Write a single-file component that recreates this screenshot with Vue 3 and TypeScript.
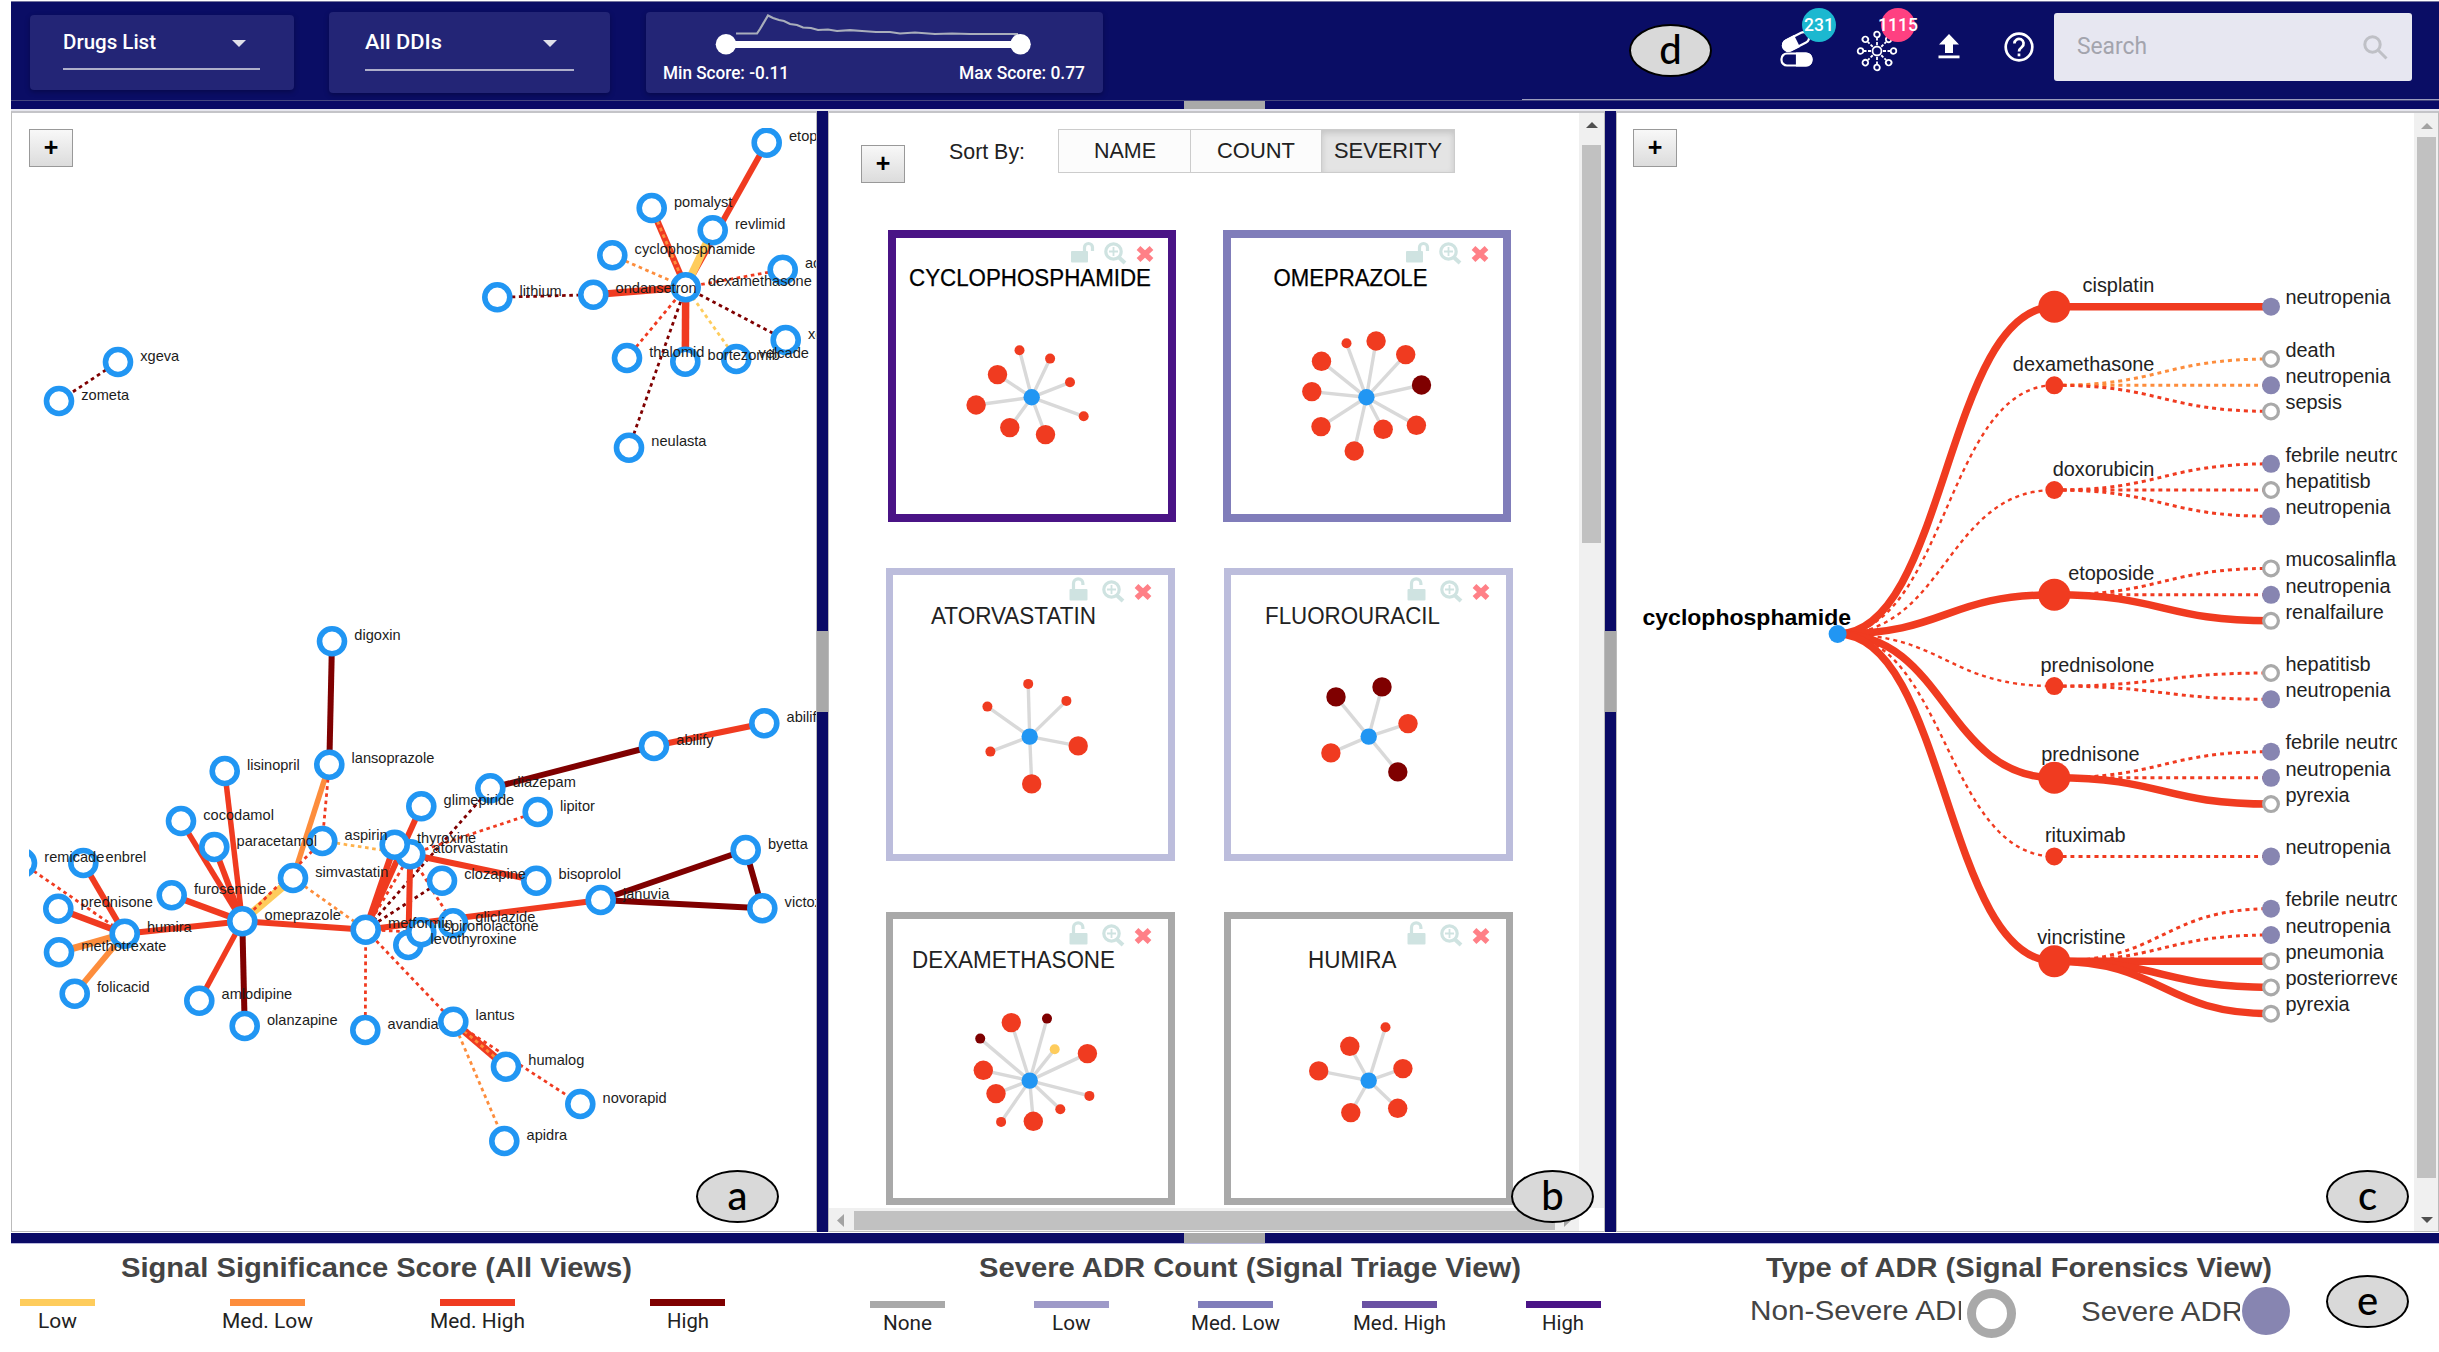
<script setup lang="ts">
import { h } from 'vue'

const RED = '#f03b20'
const DARK = '#7f0000'
const ORANGE = '#fd8d3c'
const YELLOW = '#fecc5c'
const ARIAL = '"Liberation Sans", Arial, sans-serif'
const ROBOTO = 'Roboto, sans-serif'

interface FitProps { w: number; size: number; text: string; fill?: string; weight?: number; font?: string }
// A single line of text set to an exact width.
const FitText = (p: FitProps) =>
  h('svg', { width: p.w, height: p.size, style: 'display:block;overflow:visible;flex:none' }, [
    h('text', {
      x: 0, y: p.size * 0.8, textLength: p.w, lengthAdjust: 'spacingAndGlyphs',
      'font-size': p.size, 'font-weight': p.weight ?? 400, 'font-family': p.font ?? ARIAL, fill: p.fill ?? '#222',
    }, p.text),
  ])

type Drug = [id: string, x: number, y: number, label?: string]
const drugs: Drug[] = [
  ['xgeva', 118, 362], ['zometa', 59, 401],
  ['etoposide', 766.7, 142.7], ['pomalyst', 651.7, 208], ['revlimid', 712.7, 230.3],
  ['cyclophosphamide', 612.3, 255.3], ['ondansetron', 593.3, 294.7], ['lithium', 497.3, 297.3],
  ['actemra', 782.7, 269.7], ['xeloda', 785.7, 340], ['velcade', 736.3, 359],
  ['bortezomib', 685.3, 361.7], ['thalomid', 627, 358], ['neulasta', 629, 447.7], ['dexamethasone', 685.7, 287.3],
  ['digoxin', 332, 641.3], ['lansoprazole', 329.3, 764.7], ['lisinopril', 224.7, 771],
  ['cocodamol', 181, 821], ['paracetamol', 214.3, 847], ['aspirin', 322.3, 841],
  ['remicade', 22, 863], ['enbrel', 83.3, 863], ['furosemide', 171.7, 895.3],
  ['simvastatin', 293, 878], ['omeprazole', 242.3, 921.3], ['metformin', 365.7, 929.7],
  ['humira', 124.7, 933.7], ['prednisone', 58.3, 908.7], ['methotrexate', 59, 952.3],
  ['folicacid', 74.7, 993.7], ['amlodipine', 199.3, 1000.7], ['olanzapine', 244.7, 1026],
  ['avandia', 365.3, 1030], ['atorvastatin', 410.3, 854.3], ['thyroxine', 394.7, 844.7],
  ['glimepiride', 421.3, 806.3], ['diazepam', 490.3, 788.3], ['lipitor', 537.7, 812],
  ['clozapine', 442, 880.7], ['bisoprolol', 536.3, 880.7], ['abilify', 654, 746],
  ['abilify2', 764.3, 723.3, 'abilify'], ['byetta', 745.7, 850], ['victoza', 762.3, 908.3],
  ['januvia', 600.7, 900], ['gliclazide', 453, 923.3], ['levothyroxine', 408.3, 945],
  ['spironolactone', 421.3, 932.3], ['lantus', 453.3, 1021.7], ['humalog', 506, 1066.7],
  ['novorapid', 580.3, 1104], ['apidra', 504.3, 1141],
]
const at = new Map(drugs.map((d) => [d[0], d]))

// width 0 marks a dashed (weak) interaction
type Link = [from: string, to: string, color: string, width: number]
const links: Link[] = [
  ['xgeva', 'zometa', DARK, 0],
  ['etoposide', 'dexamethasone', RED, 6], ['revlimid', 'dexamethasone', YELLOW, 8],
  ['pomalyst', 'dexamethasone', RED, 6.5], ['pomalyst', 'dexamethasone', ORANGE, 0],
  ['cyclophosphamide', 'dexamethasone', ORANGE, 0], ['ondansetron', 'dexamethasone', RED, 7],
  ['lithium', 'ondansetron', DARK, 0], ['actemra', 'dexamethasone', RED, 0],
  ['xeloda', 'dexamethasone', DARK, 0], ['velcade', 'dexamethasone', YELLOW, 0],
  ['bortezomib', 'dexamethasone', RED, 7.5], ['thalomid', 'dexamethasone', RED, 0],
  ['neulasta', 'dexamethasone', DARK, 0],
  ['digoxin', 'lansoprazole', DARK, 6], ['lansoprazole', 'simvastatin', ORANGE, 5.5],
  ['lansoprazole', 'aspirin', RED, 0],
  ['simvastatin', 'omeprazole', YELLOW, 8], ['aspirin', 'omeprazole', RED, 0],
  ['lisinopril', 'omeprazole', RED, 5.5], ['cocodamol', 'omeprazole', RED, 5.5],
  ['paracetamol', 'omeprazole', RED, 6], ['furosemide', 'omeprazole', RED, 6.5],
  ['humira', 'omeprazole', RED, 6], ['amlodipine', 'omeprazole', RED, 5.5],
  ['olanzapine', 'omeprazole', DARK, 6], ['metformin', 'omeprazole', RED, 6],
  ['simvastatin', 'metformin', ORANGE, 0], ['aspirin', 'atorvastatin', '#feb24c', 0],
  ['remicade', 'humira', RED, 0], ['enbrel', 'humira', RED, 6], ['prednisone', 'humira', RED, 6.5],
  ['methotrexate', 'humira', ORANGE, 7], ['folicacid', 'humira', ORANGE, 6],
  ['glimepiride', 'metformin', RED, 6], ['thyroxine', 'metformin', RED, 6.5],
  ['atorvastatin', 'metformin', RED, 0], ['diazepam', 'metformin', DARK, 0],
  ['clozapine', 'metformin', DARK, 0], ['lantus', 'metformin', RED, 0], ['avandia', 'metformin', RED, 0],
  ['januvia', 'metformin', RED, 6], ['spironolactone', 'metformin', RED, 0],
  ['atorvastatin', 'bisoprolol', RED, 6], ['atorvastatin', 'levothyroxine', RED, 6],
  ['lipitor', 'atorvastatin', RED, 0], ['atorvastatin', 'gliclazide', RED, 0],
  ['januvia', 'byetta', DARK, 6], ['januvia', 'victoza', DARK, 6], ['byetta', 'victoza', DARK, 6],
  ['diazepam', 'abilify', DARK, 6], ['abilify', 'abilify2', RED, 6],
  ['lantus', 'humalog', RED, 7.5], ['lantus', 'humalog', ORANGE, 0],
  ['lantus', 'novorapid', RED, 0], ['lantus', 'apidra', ORANGE, 0],
]
const edges = links.map(([a, b, color, width]) => {
  const p = at.get(a)!
  const q = at.get(b)!
  return { x1: p[1], y1: p[2], x2: q[1], y2: q[2], color, width: width || 2.8, dash: width ? undefined : '3.6 3.6' }
})

type Dot = [x: number, y: number, big: number, color?: string]
interface Card { name: string; tx: number; tw: number; cx: number; cy: number; border: string; strong: boolean; dots: Dot[] }
const rows: Card[][] = [
  [
    { name: 'CYCLOPHOSPHAMIDE', tx: 21, tw: 242, cx: 143.7, cy: 167.3, border: '#4a1486', strong: true,
      dots: [[-12.2, -47, 0], [18.4, -38.7, 0], [38.3, -15, 0], [52, 19, 0], [13.8, 37.3, 1], [-21.9, 30.3, 1], [-55.6, 7.7, 1], [-34.2, -22.7, 1]] },
    { name: 'OMEPRAZOLE', tx: 50.5, tw: 154, cx: 143.4, cy: 167.3, border: '#807dba', strong: true,
      dots: [[-19.9, -54, 0], [9.7, -56.3, 1], [39.3, -42.7, 1], [55.1, -12.3, 1, DARK], [50, 28, 1], [16.8, 32, 1], [-12.2, 53.7, 1], [-45.4, 29.3, 1], [-54.6, -5.7, 1], [-44.9, -36, 1]] },
  ],
  [
    { name: 'ATORVASTATIN', tx: 45, tw: 165, cx: 143.7, cy: 168.6, border: '#bcbddc', strong: false,
      dots: [[-1.5, -52.7, 0], [36.7, -35.7, 0], [48.5, 9.3, 1], [2, 47.3, 1], [-39.3, 15, 0], [-42.3, -30, 0]] },
    { name: 'FLUOROURACIL', tx: 41, tw: 175, cx: 144.7, cy: 168.6, border: '#bcbddc', strong: false,
      dots: [[13.3, -49.7, 1, DARK], [39.3, -13, 1], [29.1, 35.3, 1, DARK], [-37.8, 16.3, 1], [-32.7, -39.7, 1, DARK]] },
  ],
  [
    { name: 'DEXAMETHASONE', tx: 26, tw: 203, cx: 143.7, cy: 168.6, border: '#a9a9a9', strong: false,
      dots: [[-18.4, -58, 1], [17.3, -62, 0, DARK], [25, -31.3, 0, YELLOW], [57.7, -27, 1], [59.7, 15.3, 0], [30.6, 28.7, 0], [3.6, 40.7, 1], [-28.6, 41.3, 0], [-33.7, 13, 1], [-46.4, -10.3, 1], [-49.5, -42, 0, DARK]] },
    { name: 'HUMIRA', tx: 84, tw: 88.5, cx: 144.7, cy: 168.6, border: '#a9a9a9', strong: false,
      dots: [[16.8, -53.3, 0], [34.2, -12, 1], [29, 27.7, 1], [-17.9, 32, 1], [-50, -9.7, 1], [-18.9, -34.3, 1]] },
  ],
]

const SEVERE = '#8785b1'
// leaf: label, y, severe, strong, color
type Leaf = [string, number, boolean, boolean, string?]
interface Branch { name: string; y: number; strong: boolean; tx: number; ty: number; leaves: Leaf[] }
const branches: Branch[] = [
  { name: 'cisplatin', y: 306.7, strong: true, tx: 2154.4, ty: 291, leaves: [['neutropenia', 306.7, true, true]] },
  { name: 'dexamethasone', y: 385.3, strong: false, tx: 2154.4, ty: 370.5,
    leaves: [['death', 359, false, false, ORANGE], ['neutropenia', 385.3, true, false, ORANGE], ['sepsis', 411.4, false, false]] },
  { name: 'doxorubicin', y: 490, strong: false, tx: 2154.4, ty: 475,
    leaves: [['febrile neutropenia', 463.8, true, false], ['hepatitisb', 490, false, false], ['neutropenia', 516.3, true, false]] },
  { name: 'etoposide', y: 594.8, strong: true, tx: 2154.4, ty: 579.3,
    leaves: [['mucosalinflammation', 568.4, false, false], ['neutropenia', 594.8, true, false], ['renalfailure', 620.8, false, true]] },
  { name: 'prednisolone', y: 686.1, strong: false, tx: 2154.4, ty: 671.5,
    leaves: [['hepatitisb', 673, false, false], ['neutropenia', 699.3, true, false]] },
  { name: 'prednisone', y: 777.8, strong: true, tx: 2139.6, ty: 760,
    leaves: [['febrile neutropenia', 751.7, true, false], ['neutropenia', 777.8, true, false], ['pyrexia', 804.1, false, true]] },
  { name: 'rituximab', y: 856.4, strong: false, tx: 2125.6, ty: 841, leaves: [['neutropenia', 856.4, true, false]] },
  { name: 'vincristine', y: 961.2, strong: true, tx: 2125.6, ty: 943,
    leaves: [['febrile neutropenia', 908.7, true, false], ['neutropenia', 935, true, false], ['pneumonia', 961.2, false, true],
      ['posteriorreversible', 987.4, false, true], ['pyrexia', 1013.7, false, true]] },
]
const ROOT = { x: 1837.6, y: 634 }
const MID = 2054.3
const END = 2271
const curve = (x1: number, y1: number, x2: number, y2: number) => {
  const m = (x1 + x2) / 2
  return `M${x1},${y1}C${m},${y1} ${m},${y2} ${x2},${y2}`
}

interface Key { text: string; w: number; color: string }
const scoreKeys: Key[] = [
  { text: 'Low', w: 39, color: YELLOW }, { text: 'Med. Low', w: 91, color: ORANGE },
  { text: 'Med. High', w: 95, color: RED }, { text: 'High', w: 42, color: DARK },
]
const countKeys: Key[] = [
  { text: 'None', w: 49, color: '#a9a9a9' }, { text: 'Low', w: 38.5, color: '#9e9ac8' },
  { text: 'Med. Low', w: 89, color: '#807dba' }, { text: 'Med. High', w: 93, color: '#6a51a3' },
  { text: 'High', w: 42, color: '#4a1486' },
]
const spokes = [0, 45, 90, 135, 180, 225, 270, 315]
</script>

<template>
  <div class="app">
    <header class="top">
      <div class="box drugs">
        <div class="pick">
          <FitText :w="93" :size="21" text="Drugs List" fill="#fff" :weight="500" :font="ROBOTO" />
          <i class="caret"></i>
        </div>
      </div>
      <div class="box ddis">
        <div class="pick">
          <FitText :w="77" :size="21" text="All DDIs" fill="#fff" :weight="500" :font="ROBOTO" />
          <i class="caret"></i>
        </div>
      </div>
      <div class="box score">
        <svg width="457" height="52" viewBox="646 12 457 52">
          <path d="M736 33.5H757L760 29L768 15.5L773 18L779 20L784 21L790 24L797 25L803 27.5L811 28L818 30L828 29.5L837 31L850 30.2L862 31L876 32L890 32L900 33.5L915 32.5L935 34L952 33.5L970 34L985 34L1018 34" fill="none" stroke="#a9aebb" stroke-width="2.2" />
          <rect x="730" y="41" width="288" height="7" fill="#fff" />
          <circle cx="726" cy="44.3" r="10.3" fill="#fff" />
          <circle cx="1020.5" cy="44.3" r="10.3" fill="#fff" />
        </svg>
        <div class="range">
          <FitText :w="126" :size="17.5" text="Min Score: -0.11" fill="#fff" :weight="500" :font="ROBOTO" />
          <FitText :w="126" :size="17.5" text="Max Score: 0.77" fill="#fff" :weight="500" :font="ROBOTO" />
        </div>
      </div>
      <div class="tag tag-d">d</div>
      <div class="ico pills">
        <svg width="40" height="40" viewBox="1776 30 40 40" fill="none" stroke="#fff" stroke-width="2.2">
          <g transform="rotate(-27 1796 41.5)">
            <rect x="1782" y="36" width="28" height="11" rx="5.5" />
            <path d="M1782 41.5A5.500 5.500 0 0 1 1787.500 36H1796V47H1787.500A5.500 5.500 0 0 1 1782 41.500Z" fill="#fff" />
          </g>
          <rect x="1781.5" y="53.5" width="30" height="12" rx="5.500" />
          <path d="M1797 53.500H1806A5.500 6 0 0 1 1806 65.500H1797Z" fill="#fff" />
        </svg>
        <b class="count teal">231</b>
      </div>
      <div class="ico net">
        <svg width="44" height="44" viewBox="-22 -22 44 44" fill="none" stroke="#fff" stroke-width="1.8">
          <circle r="4.5" />
          <g v-for="s in spokes" :key="s" :transform="`rotate(${s})`">
            <path d="M0 -6V-13" stroke-dasharray="3 1.500" />
            <circle cy="-16.5" r="2.8" />
          </g>
        </svg>
        <b class="count pink">1115</b>
      </div>
      <svg class="ico up" width="22" height="26" viewBox="0 0 22 26" fill="#fff">
        <path d="M11 0L21 10.500H15V19H7V10.500H1Z" /><rect x="0.5" y="21.5" width="21" height="2.8" />
      </svg>
      <svg class="ico help" width="32" height="32" viewBox="-16 -16 32 32" fill="none" stroke="#fff" stroke-width="2.7">
        <circle r="13.3" />
        <path d="M-4.600 -3.600A4.600 4.600 0 1 1 2.900 0C1 1.500 0 2.300 0 4.500" /><path d="M0 6.500V9.300" />
      </svg>
      <div class="search">
        <FitText :w="70" :size="23" text="Search" fill="#a3a4ad" :font="ROBOTO" />
        <svg width="25" height="25" viewBox="0 0 25 25" fill="none" stroke="#bfc0c6" stroke-width="3">
          <circle cx="9.500" cy="9.500" r="7.700" /><path d="M15 15L23.500 23.500" />
        </svg>
      </div>
    </header>
    <div class="bar bar-top"><i></i></div>

    <main class="panels">
      <section class="panel graph">
        <button class="plus over">+</button>
        <svg width="787" height="1090" viewBox="29 128 787 1090">
          <line v-for="(e, i) in edges" :key="i" :x1="e.x1" :y1="e.y1" :x2="e.x2" :y2="e.y2" :stroke="e.color" :stroke-width="e.width" :stroke-dasharray="e.dash" />
          <circle v-for="d in drugs" :key="d[0]" :cx="d[1]" :cy="d[2]" r="12.5" fill="#fff" stroke="#2196f3" stroke-width="5.6" />
          <text v-for="d in drugs" :key="'t' + d[0]" :x="d[1] + 22.3" :y="d[2] - 1.3">{{ d[3] ?? d[0] }}</text>
        </svg>
        <div class="tag tag-a">a</div>
      </section>
      <div class="split"><i></i></div>

      <section class="panel triage">
        <div class="triage-view">
          <div class="content">
            <div class="tools">
              <button class="plus">+</button>
              <div class="sort-label"><FitText :w="76" :size="22" text="Sort By:" /></div>
              <div class="sort">
                <span class="s1"><FitText :w="62" :size="22.5" text="NAME" /></span>
                <span class="s2"><FitText :w="78" :size="22.5" text="COUNT" /></span>
                <span class="s3 on"><FitText :w="108" :size="22.5" text="SEVERITY" /></span>
              </div>
            </div>
            <div v-for="(row, r) in rows" :key="r" class="row" :class="'row' + r">
              <div v-for="c in row" :key="c.name" class="card" :style="{ borderColor: c.border }">
                <svg viewBox="7 7 274 278" width="274" height="278">
                  <g class="tool">
                    <path v-if="c.strong" d="M196.500 22V17.500A4 4 0 0 1 204.500 17.500V21" />
                    <path v-else d="M187.500 22V15.500A4.700 4.700 0 0 1 196.900 15.500V17" />
                    <rect :x="c.strong ? 183 : 183.5" y="21" :width="c.strong ? 17 : 18" height="11.5" rx="1" />
                    <circle cx="225.5" cy="21.5" r="7.7" /><path d="M231 27.500L237 33" stroke-width="4" />
                    <path d="M225.500 17V26M221 21.500H230" stroke-width="1.8" />
                  </g>
                  <path d="M250.500 18L263.500 30M263.500 18L250.500 30" stroke="#ff8087" stroke-width="5.5" />
                  <text :x="c.tx" y="55.5" :textLength="c.tw" lengthAdjust="spacingAndGlyphs" :class="{ strong: c.strong }">{{ c.name }}</text>
                  <g :transform="`translate(${c.cx} ${c.cy})`">
                    <line v-for="(d, i) in c.dots" :key="i" x1="0" y1="0" :x2="d[0]" :y2="d[1]" stroke="#d9d9d9" stroke-width="3.4" />
                    <circle v-for="(d, i) in c.dots" :key="'c' + i" :cx="d[0]" :cy="d[1]" :r="d[2] ? 9.7 : 5" :fill="d[3] ?? RED" />
                    <circle r="8.2" fill="#2196f3" />
                  </g>
                </svg>
              </div>
            </div>
          </div>
          <div class="vscroll">
            <svg width="12" height="6"><path d="M0 6L6 0L12 6Z" fill="#505050" /></svg>
            <i></i>
          </div>
        </div>
        <div class="hscroll">
          <svg width="7" height="13"><path d="M7 0L0 6.500L7 13Z" fill="#a3a3a3" /></svg>
          <i></i>
          <svg width="7" height="13"><path d="M0 0L7 6.500L0 13Z" fill="#a3a3a3" /></svg>
        </div>
        <div class="tag tag-b">b</div>
      </section>
      <div class="split"><i></i></div>

      <section class="panel forensics">
        <button class="plus over">+</button>
        <svg class="tree" width="764" height="1090" viewBox="1633 128 764 1090">
          <template v-for="b in branches" :key="b.name">
            <path :d="curve(ROOT.x, ROOT.y, MID, b.y)" :class="b.strong ? 'thick' : 'dots thin'" :stroke="RED" />
            <path v-for="l in b.leaves.filter((v) => v[3])" :key="l[1]" :d="curve(MID, b.y, END, l[1])" class="thick" :stroke="RED" />
            <path v-for="l in b.leaves.filter((v) => !v[3])" :key="l[1]" :d="curve(MID, b.y, END, l[1])" class="dots" :stroke="l[4] ?? RED" />
          </template>
          <template v-for="b in branches" :key="'n' + b.name">
            <circle :cx="MID" :cy="b.y" :r="b.strong ? 16 : 9" :fill="RED" />
            <text :x="b.tx" :y="b.ty + 0.7" text-anchor="end">{{ b.name }}</text>
            <template v-for="l in b.leaves" :key="l[1]">
              <circle v-if="l[2]" :cx="END" :cy="l[1]" r="9" :fill="SEVERE" />
              <circle v-else :cx="END" :cy="l[1]" r="7.4" fill="#fff" stroke="#a9a9a9" stroke-width="3.2" />
              <text x="2285.5" :y="l[1] - 2.3">{{ l[0] }}</text>
            </template>
          </template>
          <circle :cx="ROOT.x" :cy="ROOT.y" r="9" fill="#2196f3" />
          <text x="1642.5" y="625.4" textLength="208.5" lengthAdjust="spacingAndGlyphs" class="root">cyclophosphamide</text>
        </svg>
        <div class="vscroll far">
          <svg width="12" height="6"><path d="M0 6L6 0L12 6Z" fill="#a3a3a3" /></svg>
          <i></i>
          <svg width="12" height="6"><path d="M0 0H12L6 6Z" fill="#505050" /></svg>
        </div>
        <div class="tag tag-c">c</div>
      </section>
    </main>
    <div class="bar bar-bottom"><i></i></div>

    <footer class="legend">
      <div class="group g1">
        <FitText :w="511" :size="28.5" text="Signal Significance Score (All Views)" fill="#444" :weight="700" />
        <div class="keys">
          <div v-for="k in scoreKeys" :key="k.text" class="key">
            <i :style="{ background: k.color }"></i>
            <FitText :w="k.w" :size="21" :text="k.text" :font="ROBOTO" />
          </div>
        </div>
      </div>
      <div class="group g2">
        <FitText :w="542" :size="28.5" text="Severe ADR Count (Signal Triage View)" fill="#444" :weight="700" />
        <div class="keys">
          <div v-for="k in countKeys" :key="k.text" class="key">
            <i :style="{ background: k.color }"></i>
            <FitText :w="k.w" :size="21" :text="k.text" :font="ROBOTO" />
          </div>
        </div>
      </div>
      <div class="group g3">
        <FitText :w="506" :size="28.5" text="Type of ADR (Signal Forensics View)" fill="#444" :weight="700" />
        <div class="types">
          <div class="clip c1"><FitText :w="228" :size="28.5" text="Non-Severe ADR" fill="#444" /></div>
          <i class="ring"></i>
          <div class="clip c2"><FitText :w="162" :size="28.5" text="Severe ADR" fill="#444" /></div>
          <i class="disc"></i>
        </div>
      </div>
      <div class="tag tag-e">e</div>
    </footer>
  </div>
</template>

<style>
body { background: #fff; }
</style>

<style scoped>
.app { width: 2439px; height: 1352px; box-sizing: border-box; padding: 1px 0 0 11px; overflow: hidden; position: relative; background: #fff; font-family: "Liberation Sans", Arial, sans-serif; display: flex; flex-direction: column; }
i { display: block; font-style: normal; }
svg { display: block; flex: none; }

.top { height: 100px; box-sizing: border-box; border-top: 1px solid #74759f; border-bottom: 1px solid #45467f; background: #0a0d65; display: flex; align-items: flex-start; flex: none; position: relative; }
.top::after { content: ""; position: absolute; right: 0; bottom: 0; width: 917px; height: 1px; background: #9b9cbd; }
.box { background: #232576; border-radius: 4px; box-shadow: 0 2px 5px rgba(0, 0, 30, .35); box-sizing: border-box; flex: none; }
.drugs { width: 264px; height: 75px; margin: 13px 0 0 19px; padding: 17px 34px 0 33px; }
.ddis { width: 281px; height: 81px; margin: 10px 0 0 35px; padding: 20px 36px 0 36px; }
.score { width: 457px; height: 81px; margin: 10px 0 0 36px; }
.pick { height: 36px; border-bottom: 2px solid #aeafca; display: flex; justify-content: space-between; padding-right: 14px; }
.ddis .pick { height: 37px; padding-right: 17px; }
.caret { border: 7px solid transparent; border-top-color: #e0e0ea; border-bottom: 0; margin-top: 8px; height: 0; }
.range { display: flex; justify-content: space-between; padding: 1px 18px 0 17px; }

.tag { width: 83px; height: 53px; box-sizing: border-box; border: 2px solid #000; border-radius: 50%; background: #d9d9d9; color: #000; font: 500 40px/46px Lato, sans-serif; text-align: center; flex: none; }
.tag-d { margin: 22px 0 0 526px; }
.tag-a, .tag-b, .tag-c { position: absolute; z-index: 3; top: 1057px; }
.tag-a { right: 37px; }
.tag-b { right: 10px; }
.tag-c { right: 29px; }
.tag-e { position: absolute; right: 30px; top: 31px; }

.ico { position: relative; flex: none; }
.pills { margin: 28px 0 0 64px; }
.net { margin: 27px 0 0 39px; }
.up { margin: 32px 0 0 39px; }
.help { margin: 29px 0 0 43px; }
.count { position: absolute; width: 34px; height: 34px; border-radius: 50%; display: flex; align-items: center; justify-content: center; color: #fff; font: 500 17.5px Roboto, sans-serif; }
.teal { background: #1cb8d0; left: 26px; top: -22px; }
.pink { background: #ff4081; left: 26px; top: -21px; }
.search { width: 358px; height: 68px; box-sizing: border-box; margin: 11px 0 0 19px; padding: 0 24px 0 23px; background: #e7e7f1; border-radius: 3px; display: flex; align-items: center; justify-content: space-between; }

.bar { background: #0a0a66; flex: none; display: flex; padding-left: 1173px; }
.bar i { width: 81px; background: #a9a9a9; }
.bar-top { height: 8px; border-bottom: 2px solid #e6e6ee; }
.bar-bottom { height: 10px; margin-top: 1px; border-bottom: 1px solid #b9b9dd; }

.panels { height: 1121px; display: grid; grid-template-columns: 806px 11px 777px 11px 1fr; flex: none; }
.panel { box-sizing: border-box; border: 1px solid #bbb; border-top: 2px solid #c4c4c8; position: relative; overflow: hidden; background: #fff; }
.split { background: #0a0a66; display: flex; align-items: center; }
.split i { width: 100%; height: 81px; background: #a9a9a9; }
.plus { width: 44px; height: 38px; box-sizing: border-box; padding: 0 0 3px; border: 1.5px solid #999; background: linear-gradient(#f8f8f8, #dcdcdc); color: #000; font: 700 25px/30px "Liberation Sans", Arial, sans-serif; text-align: center; flex: none; }
.over { position: absolute; left: 16px; top: 16px; z-index: 2; }
.graph > svg { margin: 15px 0 0 17px; }
.graph .over { left: 17px; }
.graph text { font-size: 14.6px; fill: #1c1c1c; }

.triage-view { display: flex; height: 1095px; }
.content { width: 750px; flex: none; }
.tools { height: 117px; display: flex; align-items: flex-start; }
.tools .plus { margin: 32px 0 0 32px; }
.sort-label { margin: 28px 0 0 44px; }
.sort { display: flex; margin: 16px 0 0 33px; border: 1.5px solid #ccc; width: 397px; height: 44px; box-sizing: border-box; }
.sort span { display: flex; align-items: center; justify-content: center; background: #fcfcfc; border-right: 1.5px solid #ccc; box-sizing: border-box; }
.s1 { width: 132px; }
.s2 { width: 131px; }
.s3 { flex: 1; }
.sort .on { background: #e4e4e4; border-right: 0; box-shadow: inset 0 3px 6px rgba(0, 0, 0, .14); }
.row { display: flex; }
.row0 { padding-left: 59px; gap: 47px; }
.row1 { padding-left: 57px; gap: 49px; margin-top: 46px; }
.row2 { padding-left: 57px; gap: 49px; margin-top: 51px; }
.card { width: 289px; height: 293px; box-sizing: border-box; border: 7px solid; flex: none; overflow: hidden; }
.row0 .card { width: 288px; height: 292px; border-width: 8px; }
.row0 .card svg { margin: -1px; }
.card text { font-size: 23px; fill: #222; }
.card .strong { fill: #000; stroke: #000; stroke-width: .25px; }
.tool { stroke: #cfe3e1; fill: none; stroke-width: 3.2; }
.tool rect { fill: #cfe3e1; stroke: none; }
.vscroll { width: 25px; background: #f0f0f0; display: flex; flex-direction: column; align-items: center; padding-top: 9px; box-sizing: border-box; flex: none; }
.vscroll i { width: 19px; height: 398px; background: #c1c1c1; margin-top: 17px; }
.far { position: absolute; right: -1px; top: 0; height: 1119px; padding-top: 10px; }
.far i { height: 1041px; margin: 8px 0 39px; }
.hscroll { width: 750px; height: 24px; background: #f0f0f0; display: flex; align-items: center; padding-left: 8px; box-sizing: border-box; }
.hscroll i { width: 701px; height: 19px; background: #c1c1c1; margin: 0 9px 0 10px; }

.tree { margin: 15px 0 0 16px; }
.tree text { font-size: 19.9px; fill: #222; }
.tree .root { font-size: 21.5px; font-weight: 700; fill: #000; }
.tree path { fill: none; }
.thick { stroke-width: 7.5; }
.dots { stroke-width: 3; stroke-dasharray: 4 4; }
.thin { stroke-width: 2.4; }

.legend { display: flex; position: relative; flex: 1; }
.group { position: relative; flex: none; }
.g1 { width: 859px; padding-top: 10px; }
.g1 > svg { margin-left: 110px; }
.g2 { width: 880px; padding-top: 10px; }
.g2 > svg { margin-left: 109px; }
.g3 { padding-top: 10px; }
.g3 > svg { margin-left: 16px; }
.keys { display: flex; }
.g1 .keys { width: 840px; margin: 16px 0 0 -58.5px; }
.g2 .keys { margin: 18px 0 0 -45px; }
.key { display: flex; flex-direction: column; align-items: center; width: 210px; flex: none; }
.g2 .key { width: 164px; }
.key i { width: 75px; height: 7.5px; margin-bottom: 5px; }
.types { display: flex; height: 60px; align-items: flex-start; padding-top: 5px; }
.clip { overflow: hidden; height: 34px; }
.c1 { width: 211px; margin-top: 9px; }
.c2 { width: 159px; margin: 10px 0 0 65px; }
.ring { width: 49px; height: 49px; box-sizing: border-box; border: 9.5px solid #a9a9a9; border-radius: 50%; margin: 1px 0 0 5.5px; }
.disc { width: 48px; height: 48px; background: #8785b1; border-radius: 50%; margin: -1px 0 0 2px; }
</style>
